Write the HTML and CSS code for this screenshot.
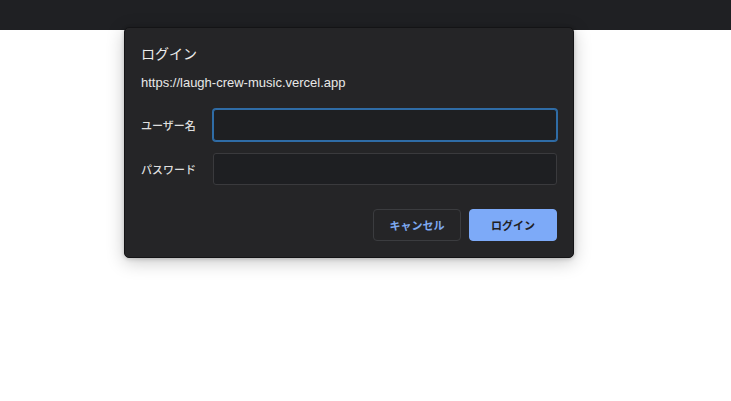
FILE: index.html
```html
<!DOCTYPE html>
<html lang="ja">
<head>
<meta charset="utf-8">
<title>ログイン</title>
<link rel="stylesheet" href="styles.css">
</head>
<body>
<div class="topbar"></div>
<div class="dialog">
  <div class="title">ログイン</div>
  <div class="origin">https://laugh-crew-music.vercel.app</div>
  <div class="form">
    <label class="label">ユーザー名</label>
    <div class="input focused"></div>
    <label class="label">パスワード</label>
    <div class="input"></div>
  </div>
  <div class="actions">
    <button class="btn cancel">キャンセル</button>
    <button class="btn primary">ログイン</button>
  </div>
</div>
</body>
</html>
```

FILE: styles.css
```css
html, body {
  margin: 0;
  padding: 0;
  background: #ffffff;
  font-family: "Liberation Sans", "Noto Sans CJK JP", sans-serif;
}
.topbar {
  height: 30px;
  background: #1f2023;
}
.dialog {
  position: absolute;
  left: 124px;
  top: 27px;
  width: 450px;
  box-sizing: border-box;
  background: #252527;
  border: 1px solid #141416;
  border-radius: 5px;
  padding: 16px;
  box-shadow: 0 4px 18px rgba(0, 0, 0, 0.22), 0 1px 4px rgba(0, 0, 0, 0.18);
  display: flex;
  flex-direction: column;
  color: #e6e6e6;
}
.title {
  font-size: 14px;
  line-height: 18px;
  height: 18px;
  font-family: "Noto Sans CJK JP", sans-serif;
  color: #ececec;
}
.origin {
  margin-top: 13px;
  font-size: 13px;
  line-height: 16px;
  color: #e8e8e8;
}
.form {
  margin-top: 18px;
  display: grid;
  grid-template-columns: 72px 1fr;
  row-gap: 12px;
  align-items: center;
}
.label {
  font-family: "Noto Sans CJK JP", sans-serif;
  font-size: 11px;
  font-weight: 500;
  color: #dedede;
}
.input {
  height: 32px;
  box-sizing: border-box;
  background: #1e1f22;
  border: 1px solid #3a3a3d;
  border-radius: 3px;
}
.input.focused {
  border-color: #2f6ca6;
  box-shadow: 0 0 0 1px #2f6ca6;
}
.actions {
  margin-top: 24px;
  display: flex;
  justify-content: flex-end;
  gap: 8px;
}
.btn {
  width: 88px;
  height: 32px;
  box-sizing: border-box;
  border-radius: 4px;
  font-family: "Noto Sans CJK JP", sans-serif;
  font-size: 11px;
  font-weight: 700;
  padding: 0;
  cursor: pointer;
}
.cancel {
  background: transparent;
  border: 1px solid #3b3c3f;
  color: #7eaaf2;
}
.primary {
  background: #7daaf8;
  border: 1px solid #7daaf8;
  color: #1f2023;
}
```
